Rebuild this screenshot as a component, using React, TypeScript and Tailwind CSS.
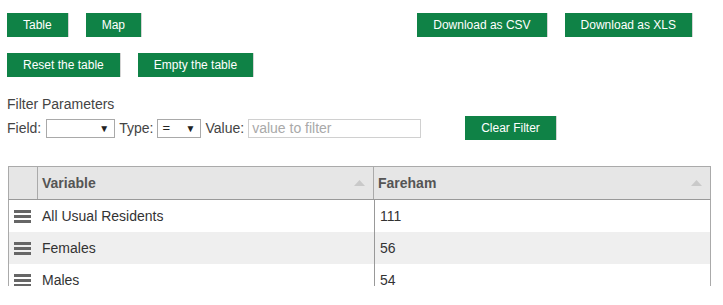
import React from "react";

const btn =
  "h-6 px-4 bg-[#0f8246] text-white text-[12px] leading-6 border-r border-[#d4d4d4]";

function Bars() {
  return (
    <div className="flex flex-col gap-[2px] w-[17px]">
      <div className="h-[3px] bg-[#666]" />
      <div className="h-[3px] bg-[#666]" />
      <div className="h-[3px] bg-[#666]" />
    </div>
  );
}

function SortArrow() {
  return (
    <svg width="11" height="6" viewBox="0 0 11 6" className="shrink-0">
      <polygon points="0,6 11,6 5.5,0" fill="#c9c9c9" />
    </svg>
  );
}

const rows = [
  { name: "All Usual Residents", value: "111" },
  { name: "Females", value: "56" },
  { name: "Males", value: "54" },
];

export default function App() {
  return (
    <div className="w-[723px] h-[305px] bg-white overflow-hidden font-['Liberation_Sans',Arial,sans-serif] text-[#333]">
      {/* Toolbar */}
      <div className="flex justify-between pl-[7px] pr-[30px] pt-[13px]">
        <div className="flex flex-col gap-4">
          <div className="flex gap-[17px]">
            <button className={btn}>Table</button>
            <button className={btn}>Map</button>
          </div>
          <div className="flex gap-[17px]">
            <button className={btn}>Reset the table</button>
            <button className={btn}>Empty the table</button>
          </div>
        </div>
        <div className="flex gap-[17px] items-start">
          <button className={btn}>Download as CSV</button>
          <button className={btn}>Download as XLS</button>
        </div>
      </div>

      {/* Filters */}
      <div className="pl-[7px] mt-[19px] text-[14px] text-[#444]">
        <div className="leading-4">Filter Parameters</div>
        <div className="flex items-center mt-[4px]">
          <span>Field:</span>
          <div className="ml-[5px] w-[69px] h-[19px] border border-[#a9a9a9] flex items-center justify-end pr-[5px]">
            <span className="text-[10px] text-[#222]">▼</span>
          </div>
          <span className="ml-[4px]">Type:</span>
          <div className="ml-[4px] w-[44px] h-[19px] border border-[#a9a9a9] flex items-center justify-between pl-[4px] pr-[5px] text-[#222]">
            <span className="text-[13px]">=</span>
            <span className="text-[10px]">▼</span>
          </div>
          <span className="ml-[4px]">Value:</span>
          <div className="ml-[4px] w-[173px] h-[19px] border border-[#d0d0d0] flex items-center pl-[3px] text-[#a9a9a9] text-[14px]">
            value to filter
          </div>
          <button className={btn + " ml-[44px]"}>Clear Filter</button>
        </div>
      </div>

      {/* Table */}
      <div className="ml-[8px] mt-[26px] w-[703px] text-[14px]">
        <div className="flex h-[34px] bg-[#e6e6e6] border border-[#aaa] border-b-[#999]">
          <div className="w-[29px] border-r border-[#aaa]" />
          <div className="w-[336px] flex items-center justify-between pl-[4px] pr-[8px] border-r border-[#aaa] font-bold text-[#555]">
            <span>Variable</span>
            <SortArrow />
          </div>
          <div className="flex-1 flex items-center justify-between pl-[4px] pr-[8px] font-bold text-[#555]">
            <span>Fareham</span>
            <SortArrow />
          </div>
        </div>
        <div className="h-[86px] overflow-hidden border-l border-r border-[#aaa]">
          {rows.map((r, i) => (
            <div
              key={r.name}
              className={"flex h-[32px] " + (i % 2 === 1 ? "bg-[#efefef]" : "bg-white")}
            >
              <div className="w-[29px] flex items-center pl-[5px]">
                <Bars />
              </div>
              <div className="w-[336px] flex items-center pl-[4px]">{r.name}</div>
              <div className="flex-1 flex items-center pl-[5px] border-l border-[#999]">
                {r.value}
              </div>
            </div>
          ))}
        </div>
      </div>
    </div>
  );
}
